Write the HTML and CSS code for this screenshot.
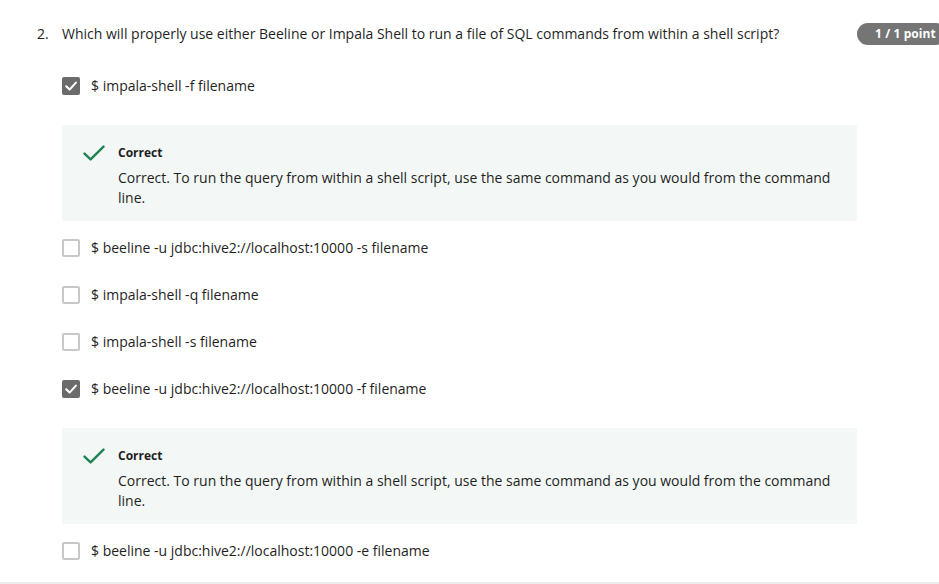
FILE: index.html
```html
<!DOCTYPE html>
<html lang="en">
<head>
<meta charset="utf-8">
<title>Quiz question</title>
<link rel="stylesheet" href="styles.css">
</head>
<body>
<div class="question">
  <div class="q-head">
    <span class="q-num">2.</span>
    <p class="q-text">Which will properly use either Beeline or Impala Shell to run a file of SQL commands from within a shell script?</p>
    <span class="badge">1 / 1 point</span>
  </div>
  <div class="options">
    <div class="option">
      <span class="box checked"><svg viewBox="0 0 18 18" width="18" height="18"><path d="M4.2 9.3 L7.6 12.6 L13.9 5.6" fill="none" stroke="#fff" stroke-width="2.1" stroke-linecap="round" stroke-linejoin="round"/></svg></span>
      <span class="label">$ impala-shell -f filename</span>
    </div>
    <div class="feedback">
      <svg class="tick" viewBox="0 0 22 17" width="22" height="17"><path d="M1.5 8.6 L7.6 14.4 L20.5 1.6" fill="none" stroke="#1f8354" stroke-width="2.4" stroke-linecap="round" stroke-linejoin="round"/></svg>
      <div class="fb-body">
        <div class="fb-title">Correct</div>
        <p class="fb-text">Correct. To run the query from within a shell script, use the same command as you would from the command line.</p>
      </div>
    </div>
    <div class="option">
      <span class="box"></span>
      <span class="label">$ beeline -u jdbc:hive2://localhost:10000 -s filename</span>
    </div>
    <div class="option">
      <span class="box"></span>
      <span class="label">$ impala-shell -q filename</span>
    </div>
    <div class="option">
      <span class="box"></span>
      <span class="label">$ impala-shell -s filename</span>
    </div>
    <div class="option">
      <span class="box checked"><svg viewBox="0 0 18 18" width="18" height="18"><path d="M4.2 9.3 L7.6 12.6 L13.9 5.6" fill="none" stroke="#fff" stroke-width="2.1" stroke-linecap="round" stroke-linejoin="round"/></svg></span>
      <span class="label">$ beeline -u jdbc:hive2://localhost:10000 -f filename</span>
    </div>
    <div class="feedback">
      <svg class="tick" viewBox="0 0 22 17" width="22" height="17"><path d="M1.5 8.6 L7.6 14.4 L20.5 1.6" fill="none" stroke="#1f8354" stroke-width="2.4" stroke-linecap="round" stroke-linejoin="round"/></svg>
      <div class="fb-body">
        <div class="fb-title">Correct</div>
        <p class="fb-text">Correct. To run the query from within a shell script, use the same command as you would from the command line.</p>
      </div>
    </div>
    <div class="option">
      <span class="box"></span>
      <span class="label">$ beeline -u jdbc:hive2://localhost:10000 -e filename</span>
    </div>
  </div>
</div>
</body>
</html>
```
FILE: styles.css
```css
html, body {
  margin: 0;
  padding: 0;
  background: #fff;
  overflow: hidden;
}
body {
  font-family: "Open Sans", "Noto Sans", sans-serif;
  font-size: 14px;
  line-height: 20px;
  color: #1f1f1f;
}
.question {
  box-sizing: border-box;
  height: 584px;
  padding: 24px 0 0 37px;
  border-bottom: 2px solid #ececec;
  overflow: hidden;
}
.q-head {
  display: grid;
  grid-template-columns: 25px 795px 90px;
  align-items: start;
}
.q-num, .q-text {
  margin: 0;
}
.badge {
  box-sizing: border-box;
  height: 22px;
  margin-top: -1px;
  padding-left: 18px;
  border-radius: 11px;
  background: #757575;
  color: #fff;
  font-size: 12px;
  font-weight: 700;
  line-height: 22px;
  letter-spacing: 0.1px;
  white-space: nowrap;
}
.options {
  display: flex;
  flex-direction: column;
  margin: 31px 0 0 25px;
  width: 795px;
}
.option {
  display: flex;
  align-items: center;
  gap: 11px;
  height: 20px;
  margin-bottom: 27px;
}
.box {
  box-sizing: border-box;
  width: 18px;
  height: 18px;
  border: 2px solid #c8c8c8;
  border-radius: 2px;
  flex: none;
  display: flex;
  align-items: center;
  justify-content: center;
}
.box.checked {
  border: none;
  background: #6b6b6b;
}
.feedback {
  display: flex;
  align-items: flex-start;
  margin: 2px 0 17px;
  padding: 19px 20px 13px 21px;
  background: #f3f8f6;
}
.tick {
  flex: none;
  margin-top: 1px;
  margin-right: 13px;
}
.fb-title {
  font-size: 12px;
  font-weight: 700;
  line-height: 18px;
  color: #1f1f1f;
}
.fb-text {
  margin: 6px 0 0;
  font-size: 14px;
  line-height: 20px;
}
```
